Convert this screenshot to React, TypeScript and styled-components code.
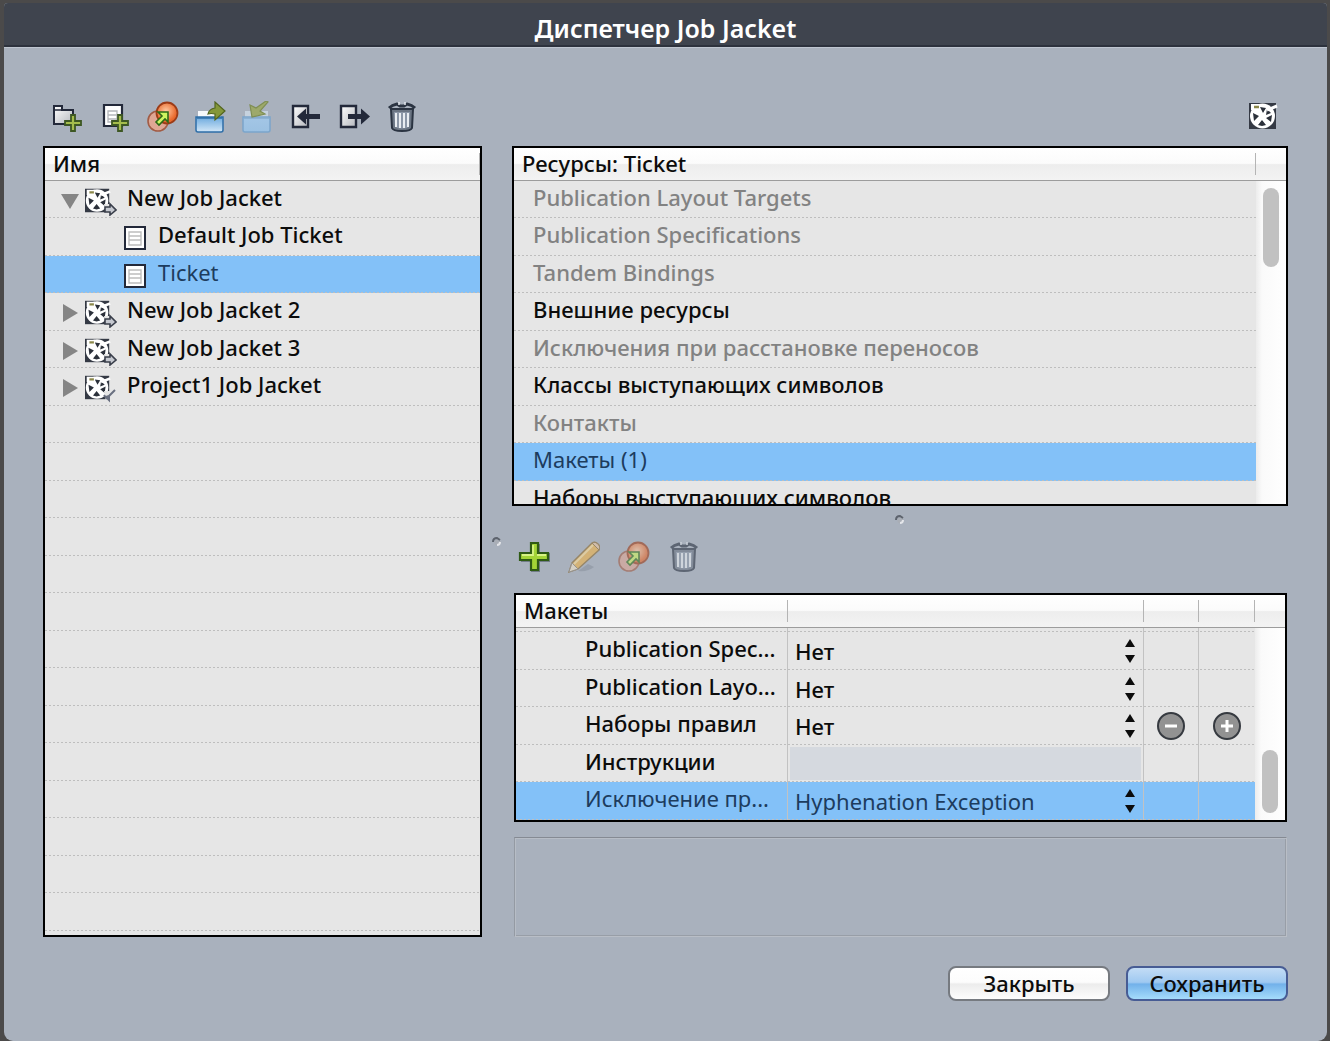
import React, { useState } from "react";
import styled, { createGlobalStyle, css } from "styled-components";

const headerFill = "linear-gradient(#ffffff 0%, #fbfbfb 48%, #ededed 52%, #f3f3f3 100%)";
const dottedLine = "repeating-linear-gradient(90deg, #bebebe 0 2px, transparent 2px 4px) left bottom / 100% 1px no-repeat";

const GlobalStyle = createGlobalStyle`
  * { box-sizing: border-box; }
  body {
    margin: 0;
    background: #4b4a4a;
    color: #0c0c0c;
    font: 500 22px/30px "Noto Sans", "Open Sans", sans-serif;
  }
  button, select { font: inherit; color: inherit; }
`;

const Dialog = styled.main`
  display: flex;
  flex-direction: column;
  min-height: calc(100vh - 3px);
  margin: 3px 3px 0 4px;
  border-radius: 4px 4px 9px 9px;
  background: #a9b1bd;
  overflow: hidden;
`;

const TitleBar = styled.h1`
  margin: 0;
  height: 44px;
  padding-top: 7px;
  border-bottom: 2px solid #2d323d;
  background: #3f444e;
  color: #ffffff;
  font-size: 25px;
  font-weight: 600;
  line-height: 36px;
  text-align: center;
`;

const Body = styled.div`
  flex: 1;
  padding: 51px 39px 40px 39px;
  border-top: 1px solid #bfc6d0;
`;

const Columns = styled.div`
  display: grid;
  grid-template-columns: minmax(0, 439fr) 30px minmax(0, 776fr);
`;

const TopTools = styled.div<{ $end?: boolean }>`
  display: flex;
  align-items: center;
  justify-content: ${(p) => (p.$end ? "flex-end" : "space-between")};
  height: 36px;
  margin-bottom: 11px;
  padding: ${(p) => (p.$end ? "0 8px" : "0 64px 0 8px")};
  ${(p) => p.$end && "grid-column: 3;"}
`;

const ToolButton = styled.button`
  display: flex;
  width: 32px;
  height: 32px;
  padding: 0;
  border: 0;
  background: none;
  &:disabled { opacity: 0.6; }
`;

const Panel = styled.section`
  display: flex;
  border: 2px solid #000000;
  background: #e6e6e6;
  overflow: hidden;
`;

const TreePanel = styled(Panel)`
  flex-direction: column;
  padding-bottom: 4px;
`;

const ResourcePanel = styled(Panel)`
  height: 360px;
`;

const PanelMain = styled.div`
  flex: 1;
  min-width: 0;
`;

const PanelHead = styled.h2`
  margin: 0;
  height: 33px;
  padding-left: 8px;
  border-bottom: 1px solid #9c9c9c;
  background: linear-gradient(#b4b4b4, #b4b4b4) right center / 1px 22px no-repeat, ${headerFill};
  font-size: 22px;
  font-weight: 500;
  line-height: 30px;
`;

const ScrollSide = styled.div`
  display: flex;
  flex-direction: column;
  width: 30px;
`;

const ScrollCap = styled.div`
  height: 33px;
  border-bottom: 1px solid #9c9c9c;
  background: ${headerFill};
`;

const Track = styled.div<{ $low?: boolean }>`
  flex: 1;
  display: flex;
  flex-direction: column;
  align-items: center;
  justify-content: ${(p) => (p.$low ? "flex-end" : "flex-start")};
  padding: 7px 0;
  background: linear-gradient(90deg, #ececec, #fafafa 20%, #ffffff);
`;

const Thumb = styled.div<{ $length: number }>`
  width: 16px;
  height: ${(p) => p.$length}px;
  border-radius: 8px;
  background: #c1c1c1;
`;

const List = styled.ul`
  margin: 0;
  padding: 0;
  list-style: none;
`;

const rowShape = css<{ $selected?: boolean }>`
  height: 37px;
  background: ${dottedLine}, ${(p) => (p.$selected ? "#83c1f8" : "transparent")};
  &:nth-child(even) { height: 38px; }
`;

const ListRow = styled.li<{ $selected?: boolean; $muted?: boolean; $inset: number; $gap?: number }>`
  ${rowShape}
  display: flex;
  align-items: center;
  gap: ${(p) => p.$gap ?? 0}px;
  padding: 0 0 6px ${(p) => p.$inset}px;
  color: ${(p) => (p.$selected ? "#1d3c5e" : p.$muted ? "#828282" : "inherit")};
  font-weight: ${(p) => (p.$selected ? 400 : 500)};
  white-space: nowrap;
`;

const Toggle = styled.button`
  display: flex;
  width: 18px;
  height: 18px;
  margin: 8px 6px 0 0;
  padding: 0;
  border: 0;
  background: none;
`;

const IconSlot = styled.span<{ $size: number }>`
  display: flex;
  width: ${(p) => p.$size}px;
  margin-top: 8px;
`;

const Splitter = styled.div<{ $row?: boolean }>`
  display: flex;
  align-items: center;
  justify-content: center;
  ${(p) => p.$row && "height: 28px;"}
`;

const RightColumn = styled.div`
  display: flex;
  flex-direction: column;
`;

const LowerPart = styled.div`
  flex: 1;
  display: flex;
  flex-direction: column;
  padding: 0 1px 0 2px;
`;

const LowerTools = styled.div`
  display: flex;
  gap: 18px;
  padding: 7px 4px 20px;
`;

const Table = styled.table`
  width: 100%;
  border-spacing: 0;
  table-layout: fixed;
`;

const HeadCell = styled.th<{ $width?: number }>`
  ${(p) => p.$width && `width: ${p.$width}px;`}
  height: 33px;
  padding: 0 0 2px 8px;
  border-bottom: 1px solid #9c9c9c;
  background: linear-gradient(#b4b4b4, #b4b4b4) right center / 1px 22px no-repeat, ${headerFill};
  font-weight: 500;
  line-height: 30px;
  text-align: left;
`;

const ScrolledRow = styled.tr`
  height: 4px;
  background: ${dottedLine};
`;

const TableRow = styled.tr<{ $selected?: boolean }>`
  ${rowShape}
  color: ${(p) => (p.$selected ? "#1d3c5e" : "inherit")};
  font-weight: ${(p) => (p.$selected ? 400 : 500)};
`;

const Cell = styled.td`
  padding: 0;
  &:not(:last-child) { border-right: 1px solid #c2c2c2; }
`;

const NameCell = styled.th`
  padding: 0 0 6px 69px;
  border-right: 1px solid #c2c2c2;
  font-weight: inherit;
  text-align: left;
  white-space: nowrap;
  overflow: hidden;
`;

const Picker = styled.label`
  display: grid;
  align-items: center;
  height: 36px;
  & > * { grid-area: 1 / 1; }
  & > svg { justify-self: end; margin-right: 7px; pointer-events: none; }
`;

const Select = styled.select`
  width: 100%;
  height: 36px;
  padding: 0 24px 0 7px;
  border: 0;
  background: none;
  appearance: none;
  line-height: 30px;
`;

const BlockedField = styled.div`
  height: 33px;
  margin: 0 2px;
  background: #d5d9df;
`;

const RoundButton = styled.button`
  display: flex;
  align-items: center;
  justify-content: center;
  width: 28px;
  height: 28px;
  margin: 0 auto;
  padding: 0;
  border: 2px solid #363a40;
  border-radius: 50%;
  background: #929292;
`;

const InfoBox = styled.div`
  flex: 1;
  margin-top: 15px;
  border: 1px solid;
  border-color: #858a93 #b9bec6 #b9bec6 #949aa3;
  box-shadow: inset 1px 1px 0 #b7bdc6, inset -1px -1px 0 #989ea7;
`;

const Footer = styled.footer`
  display: flex;
  justify-content: flex-end;
  gap: 16px;
  margin-top: 29px;
`;

const PushButton = styled.button<{ $primary?: boolean }>`
  width: 162px;
  height: 35px;
  padding: 0 0 2px;
  border: 2px solid ${(p) => (p.$primary ? "#475c94" : "#767a80")};
  border-radius: 8px;
  background: ${(p) =>
    p.$primary
      ? "linear-gradient(#c3dcf5 0%, #9fc9f1 46%, #72b1ea 52%, #a5dcfb 100%)"
      : "linear-gradient(#ffffff 0%, #fcfcfc 46%, #ececec 52%, #fdfdfd 100%)"};
  line-height: 30px;
`;

const PlusShape = () => (
  <path d="M20 14h4v6h6v4h-6v6h-4v-6h-6v-4h6z" fill="#a5bd4c" stroke="#3d5723" strokeWidth="1.8" />
);

const FolderAdd = () => (
  <svg width="32" height="32" viewBox="0 0 32 32">
    <defs>
      <linearGradient id="paper" x1="0" y1="0" x2="1" y2="1">
        <stop offset="0" stopColor="#fff" />
        <stop offset="1" stopColor="#b5b8be" />
      </linearGradient>
    </defs>
    <path d="M3 23V5h8v4h11v14z" fill="url(#paper)" stroke="#23293a" strokeWidth="2" />
    <path d="M4 9h8" stroke="#23293a" strokeWidth="1.5" />
    <PlusShape />
  </svg>
);

const PageAdd = () => (
  <svg width="32" height="32" viewBox="0 0 32 32">
    <path d="M5 4h18v21H5z" fill="#fff" stroke="#23293a" strokeWidth="2.2" />
    <path d="M9 10h9v11H9zM9 14h9M9 18h9" fill="none" stroke="#b4b6ba" strokeWidth="1.3" />
    <g transform="translate(-1 0)">
      <PlusShape />
    </g>
  </svg>
);

const Duplicate = () => (
  <svg width="32" height="32" viewBox="0 0 32 32">
    <defs>
      <radialGradient id="coral" cx="0.45" cy="0.4">
        <stop offset="0" stopColor="#ffc9a0" />
        <stop offset="1" stopColor="#e8682b" />
      </radialGradient>
    </defs>
    <circle cx="11" cy="20" r="10" fill="#dfa794" stroke="#a25c45" strokeWidth="1.6" />
    <circle cx="20" cy="12" r="10.500" fill="url(#coral)" stroke="#9c3c17" strokeWidth="1.8" />
    <path d="M11 11h10v10l-3-3-6 6-3-3 6-6z" fill="#cdf45f" stroke="#2d6a17" strokeWidth="1.6" />
  </svg>
);

const BoxBase = ({ soft }: { soft?: boolean }) => (
  <>
    <defs>
      <linearGradient id={soft ? "boxSoft" : "box"} x1="0" y1="0" x2="0" y2="1">
        <stop offset="0" stopColor={soft ? "#a3c6e6" : "#6ba9de"} />
        <stop offset="1" stopColor={soft ? "#9cc1e2" : "#d3e7f7"} />
      </linearGradient>
    </defs>
    <path d="M3 10h23v6H3z" fill={soft ? "#c6d2de" : "#f6f8fb"} />
    <path d="M1 16h27v13a2 2 0 0 1-2 2H3a2 2 0 0 1-2-2z" fill={`url(#${soft ? "boxSoft" : "box"})`} stroke={soft ? "#7ba5cb" : "#2e6ea8"} strokeWidth="1.500" />
    <path d="M2 17h25" stroke={soft ? "#86abcd" : "#2f6fa9"} strokeWidth="1.500" />
  </>
);

const BoxOut = () => (
  <svg width="32" height="32" viewBox="0 0 32 32">
    <BoxBase />
    <path d="M13 13q1-5 7-6V1l10 9-10 9v-6q-4-1-7 0z" fill="#84973a" stroke="#53651f" strokeWidth="1.200" />
  </svg>
);

const BoxCheck = () => (
  <svg width="32" height="32" viewBox="0 0 32 32">
    <BoxBase soft />
    <path d="M8 4l6 3 10-7 2 1-8 9 5 3-13 3z" fill="#9da96b" stroke="#7f8e54" strokeWidth="1.200" />
  </svg>
);

const ImportIcon = () => (
  <svg width="32" height="32" viewBox="0 0 32 32">
    <path d="M3 5h15v21H3z" fill="url(#paper)" stroke="#23293a" strokeWidth="2.400" />
    <path d="M7 15.500l9-8v5.500h14v5H16v5.500z" fill="#23293a" />
  </svg>
);

const ExportIcon = () => (
  <svg width="32" height="32" viewBox="0 0 32 32">
    <path d="M3 5h15v21H3z" fill="url(#paper)" stroke="#23293a" strokeWidth="2.400" />
    <path d="M32 15.500l-9-8V13H10v5h13v5.500z" fill="#23293a" />
  </svg>
);

const Trash = () => (
  <svg width="32" height="32" viewBox="0 0 32 32">
    <path d="M5 8h22l-1 19q-1 3-10 3T6 27z" fill="#6b7583" stroke="#2b3442" strokeWidth="2" />
    <path d="M8 11h16l-1 15q-7 3-14 0z" fill="#8c97a7" />
    <path d="M10 12v14M14 12v15M18 12v15M22 12v14" stroke="#e9edf2" strokeWidth="2" />
    <path d="M3 7q3-3 8-4l3 2h4l3-2q5 1 8 4" fill="none" stroke="#2b3442" strokeWidth="3" />
    <path d="M13 1v3M19 1v3" stroke="#dfe4ea" strokeWidth="1.600" />
  </svg>
);

const BigPlus = () => (
  <svg width="32" height="32" viewBox="0 0 32 32">
    <path d="M13 3h9v9h10v9H22v10h-9V21H3v-9h10z" fill="#4f5964" opacity="0.600" />
    <path d="M13 2h7v10h10v7H20v10h-7V19H2v-7h11z" fill="#a3d436" stroke="#2f5a14" strokeWidth="2.200" />
    <path d="M15 4v10H4M19 14h9" fill="none" stroke="#d7f285" strokeWidth="1.800" />
  </svg>
);

const Pencil = () => (
  <svg width="32" height="32" viewBox="0 0 32 32">
    <path d="M10 30q10 1 16-4l-6-3z" fill="#6f7784" opacity="0.500" />
    <path d="M1 31l3-9L24 2q3-2 6 1t1 6L10 28z" fill="#f0b449" stroke="#8a6a32" strokeWidth="1.400" />
    <path d="M6 23L25 4" stroke="#ffdf96" strokeWidth="2" />
    <path d="M1 31l3-9 6 6z" fill="#f3e6cb" stroke="#8b8071" strokeWidth="1" />
    <path d="M24 2q3-2 6 1t1 6l-6-6z" fill="#e9c4a0" stroke="#8a6a32" strokeWidth="1" />
  </svg>
);

const JacketShape = () => (
  <>
    <path d="M1 2h27v26H1z" fill="#343944" />
    <circle cx="14.500" cy="15" r="12.500" fill="#fff" />
    <path d="M12 6l6 1-3 5zM19 8l4 4-5 2zM5 12l6 3-5 5zM18 17l6-3-1 7zM10 24l4-5 4 5-4 1z" fill="#2b303a" />
    <path d="M3 3h9v6H3z" fill="#fff" />
    <path d="M6 6h5" stroke="#8c884a" strokeWidth="2.500" />
    <path d="M19 9l10-4" stroke="#fff" strokeWidth="3" />
  </>
);

const JacketIcon = () => (
  <svg width="32" height="32" viewBox="0 0 32 32">
    <JacketShape />
  </svg>
);

const TreeJacket = ({ closed }: { closed?: boolean }) => (
  <svg width="32" height="30" viewBox="0 0 32 30">
    <g transform="translate(-1 1) scale(0.900)">
      <JacketShape />
    </g>
    <path d="M19 18h12v11H21z" fill="#e6e6e6" />
    {closed ? (
      <path d="M30 17l-6 6v4l-3-3 3-1M19 22l3 4" fill="none" stroke="#6a7080" strokeWidth="2" />
    ) : (
      <path d="M20 21h5v-3l6 6-6 5v-3h-5z" fill="#c5c8cf" stroke="#3a3f4b" strokeWidth="1.600" />
    )}
  </svg>
);

const TicketIcon = () => (
  <svg width="22" height="24" viewBox="0 0 22 24">
    <path d="M1 1h20v22H1z" fill="#fff" stroke="#23293a" strokeWidth="2" />
    <path d="M5 6h12v13H5zM5 10h12M5 14h12" fill="none" stroke="#bdbdbd" strokeWidth="1.400" />
  </svg>
);

const Triangle = ({ open }: { open: boolean }) => (
  <svg width="18" height="18" viewBox="0 0 18 18">
    <path d={open ? "M0 2h18L9 17z" : "M2 0l15 9-15 9z"} fill="#858585" />
  </svg>
);

const UpDown = () => (
  <svg width="12" height="26" viewBox="0 0 12 26">
    <path d="M1 9l5-8 5 8zM1 17h10l-5 8z" fill="#0c0c0c" />
  </svg>
);

const Dimple = () => (
  <svg width="10" height="10" viewBox="0 0 10 10">
    <circle cx="5.500" cy="5.500" r="3" fill="#a9aeb6" />
    <path d="M1 5q0-4 4-4l3 2" fill="none" stroke="#5d636d" strokeWidth="2" />
    <path d="M8 5q0 3-3 3" fill="none" stroke="#e4e6ea" strokeWidth="2" />
  </svg>
);

const Sign = ({ plus }: { plus?: boolean }) => (
  <svg width="14" height="14" viewBox="0 0 14 14">
    <path d={plus ? "M1 7h12M7 1v12" : "M1 7h12"} stroke="#fff" strokeWidth="3" />
  </svg>
);

type TreeItem = { name: string; kind: "jacket" | "ticket"; open?: boolean; closed?: boolean };

const tree: TreeItem[] = [
  { name: "New Job Jacket", kind: "jacket", open: true },
  { name: "Default Job Ticket", kind: "ticket" },
  { name: "Ticket", kind: "ticket" },
  { name: "New Job Jacket 2", kind: "jacket" },
  { name: "New Job Jacket 3", kind: "jacket" },
  { name: "Project1 Job Jacket", kind: "jacket", closed: true },
];

const resources = [
  { name: "Publication Layout Targets", muted: true },
  { name: "Publication Specifications", muted: true },
  { name: "Tandem Bindings", muted: true },
  { name: "Внешние ресурсы" },
  { name: "Исключения при расстановке переносов", muted: true },
  { name: "Классы выступающих символов" },
  { name: "Контакты", muted: true },
  { name: "Макеты (1)" },
  { name: "Наборы выступающих символов" },
];

const layouts = [
  { name: "Publication Spec...", value: "Нет" },
  { name: "Publication Layo...", value: "Нет" },
  { name: "Наборы правил", value: "Нет", editable: true },
  { name: "Инструкции" },
  { name: "Исключение пр...", value: "Hyphenation Exception" },
];

const tools = [
  { label: "Новый Job Jacket", icon: <FolderAdd /> },
  { label: "Новый Job Ticket", icon: <PageAdd /> },
  { label: "Дублировать", icon: <Duplicate /> },
  { label: "Открыть", icon: <BoxOut /> },
  { label: "Связать", icon: <BoxCheck /> },
  { label: "Импорт", icon: <ImportIcon /> },
  { label: "Экспорт", icon: <ExportIcon /> },
  { label: "Удалить", icon: <Trash /> },
];

export default function App() {
  const [ticket, setTicket] = useState("Ticket");
  const [resource, setResource] = useState("Макеты (1)");
  const blanks = Array.from({ length: 20 - tree.length }, (_, i) => i);

  return (
    <>
      <GlobalStyle />
      <Dialog>
        <TitleBar>Диспетчер Job Jacket</TitleBar>
        <Body>
          <Columns>
            <TopTools>
              {tools.map((t) => (
                <ToolButton key={t.label} aria-label={t.label}>{t.icon}</ToolButton>
              ))}
            </TopTools>
            <TopTools $end>
              <ToolButton aria-label="Job Jacket"><JacketIcon /></ToolButton>
            </TopTools>

            <TreePanel>
              <PanelHead>Имя</PanelHead>
              <List>
                {tree.map((item) => {
                  const jacket = item.kind === "jacket";
                  return (
                    <ListRow
                      key={item.name}
                      $inset={jacket ? 16 : 79}
                      $gap={jacket ? 0 : 2}
                      $selected={item.name === ticket}
                      onClick={() => setTicket(item.name)}
                    >
                      {jacket && (
                        <Toggle aria-label={item.name} aria-expanded={!!item.open}>
                          <Triangle open={!!item.open} />
                        </Toggle>
                      )}
                      <IconSlot $size={jacket ? 42 : 32}>
                        {jacket ? <TreeJacket closed={item.closed} /> : <TicketIcon />}
                      </IconSlot>
                      {item.name}
                    </ListRow>
                  );
                })}
                {blanks.map((n) => <ListRow key={n} $inset={16} aria-hidden />)}
              </List>
            </TreePanel>

            <Splitter><Dimple /></Splitter>

            <RightColumn>
              <ResourcePanel>
                <PanelMain>
                  <PanelHead>Ресурсы: Ticket</PanelHead>
                  <List>
                    {resources.map((r) => (
                      <ListRow
                        key={r.name}
                        $inset={19}
                        $muted={r.muted}
                        $selected={r.name === resource}
                        onClick={() => setResource(r.name)}
                      >
                        {r.name}
                      </ListRow>
                    ))}
                  </List>
                </PanelMain>
                <ScrollSide>
                  <ScrollCap />
                  <Track><Thumb $length={79} /></Track>
                </ScrollSide>
              </ResourcePanel>

              <Splitter $row><Dimple /></Splitter>

              <LowerPart>
                <LowerTools>
                  <ToolButton aria-label="Добавить"><BigPlus /></ToolButton>
                  <ToolButton aria-label="Изменить" disabled><Pencil /></ToolButton>
                  <ToolButton aria-label="Дублировать макет" disabled><Duplicate /></ToolButton>
                  <ToolButton aria-label="Удалить макет" disabled><Trash /></ToolButton>
                </LowerTools>
                <Panel>
                  <PanelMain>
                    <Table>
                      <thead>
                        <tr>
                          <HeadCell scope="col" $width={272}>Макеты</HeadCell>
                          <HeadCell />
                          <HeadCell $width={55} />
                          <HeadCell $width={56} />
                        </tr>
                      </thead>
                      <tbody>
                        <ScrolledRow aria-hidden><Cell /><Cell /><Cell /><Cell /></ScrolledRow>
                        {layouts.map((row, i) => (
                          <TableRow key={row.name} $selected={i === 4}>
                            <NameCell scope="row">{row.name}</NameCell>
                            <Cell>
                              {row.value ? (
                                <Picker>
                                  <Select aria-label={row.name} defaultValue={row.value}>
                                    <option>{row.value}</option>
                                  </Select>
                                  <UpDown />
                                </Picker>
                              ) : (
                                <BlockedField />
                              )}
                            </Cell>
                            <Cell>{row.editable && <RoundButton aria-label="Убрать"><Sign /></RoundButton>}</Cell>
                            <Cell>{row.editable && <RoundButton aria-label="Добавить правило"><Sign plus /></RoundButton>}</Cell>
                          </TableRow>
                        ))}
                      </tbody>
                    </Table>
                  </PanelMain>
                  <ScrollSide>
                    <ScrollCap />
                    <Track $low><Thumb $length={63} /></Track>
                  </ScrollSide>
                </Panel>
                <InfoBox />
              </LowerPart>
            </RightColumn>
          </Columns>

          <Footer>
            <PushButton>Закрыть</PushButton>
            <PushButton $primary>Сохранить</PushButton>
          </Footer>
        </Body>
      </Dialog>
    </>
  );
}
